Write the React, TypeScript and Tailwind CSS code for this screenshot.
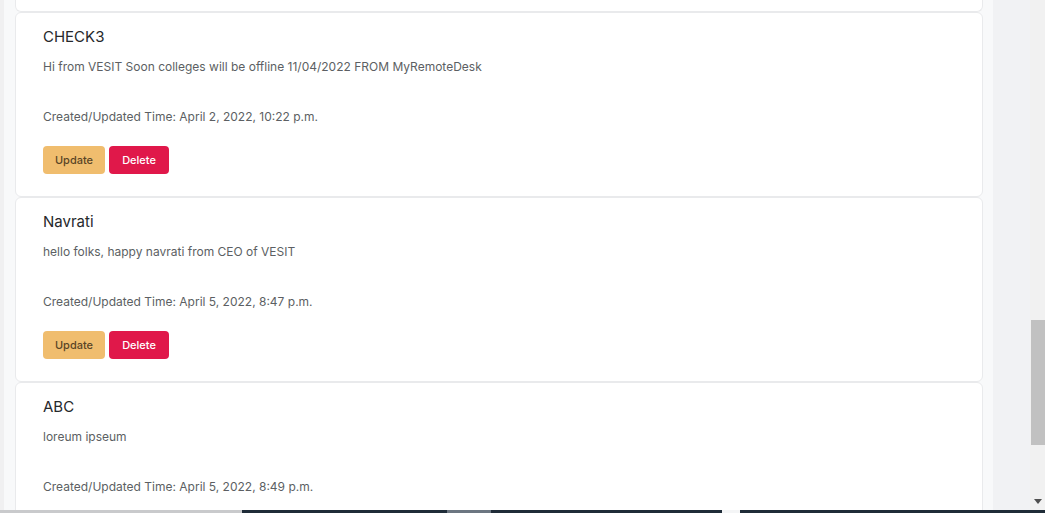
const posts = [
  {
    title: 'CHECK3',
    body: 'Hi from VESIT Soon colleges will be offline 11/04/2022 FROM MyRemoteDesk',
    time: 'April 2, 2022, 10:22 p.m.',
  },
  {
    title: 'Navrati',
    body: 'hello folks, happy navrati from CEO of VESIT',
    time: 'April 5, 2022, 8:47 p.m.',
  },
  {
    title: 'ABC',
    body: 'loreum ipseum',
    time: 'April 5, 2022, 8:49 p.m.',
  },
];

function PostCard({
  title,
  body,
  time,
  actions = true,
}: {
  title: string;
  body: string;
  time: string;
  actions?: boolean;
}) {
  return (
    <div className="shrink-0 rounded-md border border-[#e9eaec] bg-white px-[27px] pt-[13px] pb-[22px]">
      <h5 className="text-[15px] leading-[22px] text-[#26282b]">{title}</h5>
      <p className="mt-[10px] text-[12px] leading-[18px] text-[#5c5f63]">{body}</p>
      <p className="mt-[32px] text-[12px] leading-[18px] text-[#5c5f63]">Created/Updated Time: {time}</p>
      {actions && (
        <div className="mt-[20px] flex gap-[4px]">
          <button className="h-[28px] w-[62px] rounded-[4px] bg-[#f0bd6e] text-[11px] font-medium text-[#5a4526]">
            Update
          </button>
          <button className="h-[28px] w-[60px] rounded-[4px] bg-[#e0184a] text-[11px] font-medium text-white">
            Delete
          </button>
        </div>
      )}
    </div>
  );
}

export default function App() {
  return (
    <div className="flex h-[513px] w-[1045px] flex-col overflow-hidden font-['Inter',sans-serif]">
      <div className="flex min-h-0 flex-1">
        {/* page content, scrolled part-way down */}
        <main className="flex w-[993px] shrink-0 flex-col overflow-hidden border-l-[4px] border-[#f0f0f1] bg-[#f8f9fa] pl-[11px] pr-[10px]">
          <div className="h-[12px] shrink-0 rounded-b-md border border-t-0 border-[#e9eaec] bg-white" />
          {posts.map((p, i) => (
            <PostCard key={p.title} {...p} actions={i < posts.length - 1} />
          ))}
        </main>

        {/* right gutter */}
        <div className="w-[37px] shrink-0 bg-[#f1f2f4]" />

        {/* scrollbar */}
        <div className="flex w-[15px] shrink-0 flex-col bg-[#f1f1f1]">
          <div className="h-[320px]" />
          <div className="ml-px h-[125px] bg-[#c1c1c1]" />
          <div className="flex flex-1 items-end justify-center pb-[6px]">
            <svg width="8" height="5" viewBox="0 0 8 5">
              <path d="M0 0 L8 0 L4 5 Z" fill="#505050" />
            </svg>
          </div>
        </div>
      </div>

      {/* taskbar edge */}
      <div className="flex h-[3px] shrink-0">
        <div className="w-[242px] bg-[#c9cacc]" />
        <div className="w-[205px] bg-[#1f2c38]" />
        <div className="w-[44px] bg-[#6c7681]" />
        <div className="w-[231px] bg-[#1f2c38]" />
        <div className="w-[18px] bg-[#f4f5f6]" />
        <div className="flex-1 bg-[#1f2c38]" />
      </div>
    </div>
  );
}
